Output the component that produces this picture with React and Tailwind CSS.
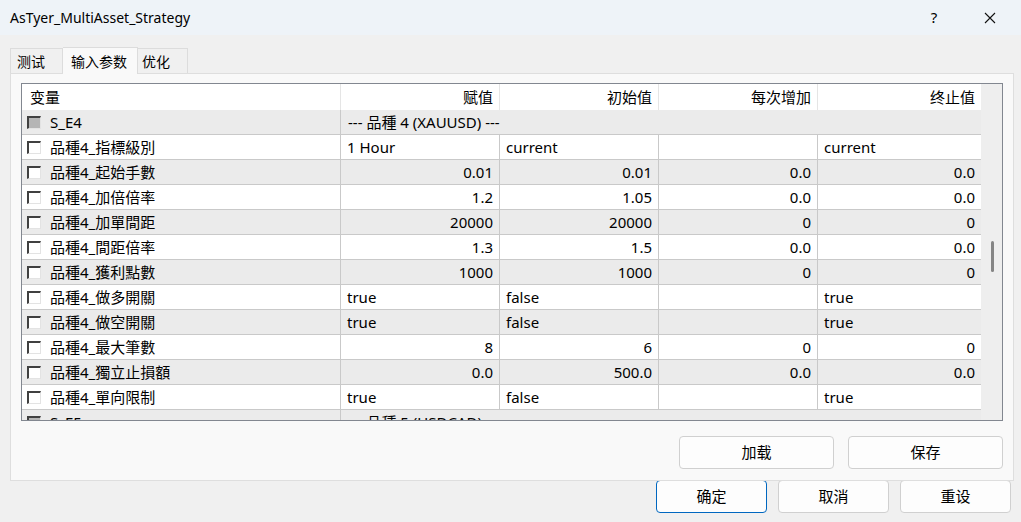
import React from "react";

const FONT = { fontFamily: '"Noto Sans", "Noto Sans CJK SC", sans-serif' };

const rows = [
  { group: true, name: "S_E4", text: "--- 品種 4 (XAUUSD) ---" },
  { name: "品種4_指標級別", v: ["1 Hour", "current", "", "current"], left: true },
  { name: "品種4_起始手數", v: ["0.01", "0.01", "0.0", "0.0"] },
  { name: "品種4_加倍倍率", v: ["1.2", "1.05", "0.0", "0.0"] },
  { name: "品種4_加單間距", v: ["20000", "20000", "0", "0"] },
  { name: "品種4_間距倍率", v: ["1.3", "1.5", "0.0", "0.0"] },
  { name: "品種4_獲利點數", v: ["1000", "1000", "0", "0"] },
  { name: "品種4_做多開關", v: ["true", "false", "", "true"], left: true },
  { name: "品種4_做空開關", v: ["true", "false", "", "true"], left: true },
  { name: "品種4_最大筆數", v: ["8", "6", "0", "0"] },
  { name: "品種4_獨立止損額", v: ["0.0", "500.0", "0.0", "0.0"] },
  { name: "品種4_單向限制", v: ["true", "false", "", "true"], left: true },
  { group: true, name: "S_E5", text: "--- 品種 5 (USDCAD) ---" },
];

const widths = ["w-[159px]", "w-[159px]", "w-[159px]", "w-[163px]"];

function Check({ gray }) {
  return (
    <div
      className={`w-[14px] h-[13px] shrink-0 border-t-2 border-l-2 border-t-[#404040] border-l-[#404040] border-r border-b border-r-[#e3e3e3] border-b-[#e3e3e3] ${
        gray ? "bg-[#b5b5b5]" : "bg-white"
      }`}
    />
  );
}

function Row({ r, i }) {
  const bg = i % 2 === 0 ? "bg-[#ebebeb]" : "bg-white";
  return (
    <div className={`flex h-[25px] shrink-0 border-b border-[#c9c9c9] ${bg}`}>
      <div className="w-[319px] shrink-0 flex items-center gap-[9px] pl-[5px] border-r border-[#c9c9c9]">
        <Check gray={r.group} />
        <span className="pt-px">{r.name}</span>
      </div>
      {r.group ? (
        <div className="flex-1 flex items-center pl-[7px] pt-px">{r.text}</div>
      ) : (
        r.v.map((val, k) => (
          <div
            key={k}
            className={`${widths[k]} shrink-0 flex items-center pt-px ${
              k < 3 ? "border-r border-[#c9c9c9]" : ""
            } ${r.left ? "justify-start pl-[6px]" : "justify-end pr-[6px]"}`}
          >
            {val}
          </div>
        ))
      )}
    </div>
  );
}

function Btn({ children, w, primary }) {
  return (
    <div
      className={`${w} h-[33px] flex items-center justify-center rounded-[4px] bg-[#fdfdfd] text-[15px] ${
        primary ? "border border-[#0067c0]" : "border border-[#d0d0d0]"
      }`}
    >
      {children}
    </div>
  );
}

export default function App() {
  return (
    <div
      className="w-[1021px] h-[522px] bg-[#f0f0f0] overflow-hidden text-black flex flex-col"
      style={FONT}
    >
      {/* title bar */}
      <div className="h-[35px] shrink-0 bg-[#eef3f8] flex items-center pl-[10px]">
        <span className="text-[14px]">AsTyer_MultiAsset_Strategy</span>
        <div className="ml-auto flex items-center">
          <span className="text-[15px] w-[20px] text-center mr-[40px]">?</span>
          <svg width="12" height="12" viewBox="0 0 12 12" className="mr-[25px]">
            <path d="M1 1 L11 11 M11 1 L1 11" stroke="#111" strokeWidth="1.1" />
          </svg>
        </div>
      </div>

      {/* tabs */}
      <div className="h-[11px] shrink-0" />
      <div className="flex items-end pl-[10px] h-[27px] shrink-0 text-[14px]">
        <div className="w-[53px] h-[25px] border border-b-0 border-[#dcdcdc] bg-[#f0f0f0] flex items-center pl-[6px]">
          测试
        </div>
        <div className="w-[75px] h-[27px] border border-b-0 border-l-0 border-[#dcdcdc] bg-[#f9f9f9] flex items-center pl-[8px] relative z-10 -mb-px">
          输入参数
        </div>
        <div className="w-[50px] h-[25px] border border-b-0 border-l-0 border-[#dcdcdc] bg-[#f0f0f0] flex items-center pl-[4px]">
          优化
        </div>
      </div>

      {/* panel */}
      <div className="relative ml-[10px] w-[1004px] h-[408px] shrink-0 border border-[#dedede] bg-[#f9f9f9] pt-[9px] pl-[10px]">
        <div className="w-[982px] h-[338px] border border-[#828790] flex text-[15px] bg-[#f0f0f0]">
          <div className="w-[959px] shrink-0 flex flex-col overflow-hidden">
            {/* header */}
            <div className="flex h-[26px] shrink-0 bg-white">
              <div className="w-[319px] shrink-0 flex items-center pl-[8px] pt-px border-r border-[#e5e5e5]">
                变量
              </div>
              {["赋值", "初始值", "每次增加", "终止值"].map((h, k) => (
                <div
                  key={h}
                  className={`${widths[k]} shrink-0 flex items-center justify-end pr-[6px] pt-px ${
                    k < 3 ? "border-r border-[#e5e5e5]" : ""
                  }`}
                >
                  {h}
                </div>
              ))}
            </div>
            {rows.map((r, i) => (
              <Row key={i} r={r} i={i} />
            ))}
          </div>
          {/* scrollbar */}
          <div className="flex-1 flex flex-col items-center pt-[157px] bg-[#eeeeee]">
            <div className="w-[3px] h-[31px] rounded-full bg-[#858585] ml-[2px]" />
          </div>
        </div>

        <div className="flex justify-end gap-[14px] mt-[15px] w-[982px]">
          <Btn w="w-[155px]">加载</Btn>
          <Btn w="w-[155px]">保存</Btn>
        </div>
      </div>

      {/* bottom buttons */}
      <div className="flex pl-[656px] gap-[11px] -mt-[1px]">
        <Btn w="w-[111px]" primary>
          确定
        </Btn>
        <Btn w="w-[111px]">取消</Btn>
        <Btn w="w-[111px]">重设</Btn>
      </div>
    </div>
  );
}
